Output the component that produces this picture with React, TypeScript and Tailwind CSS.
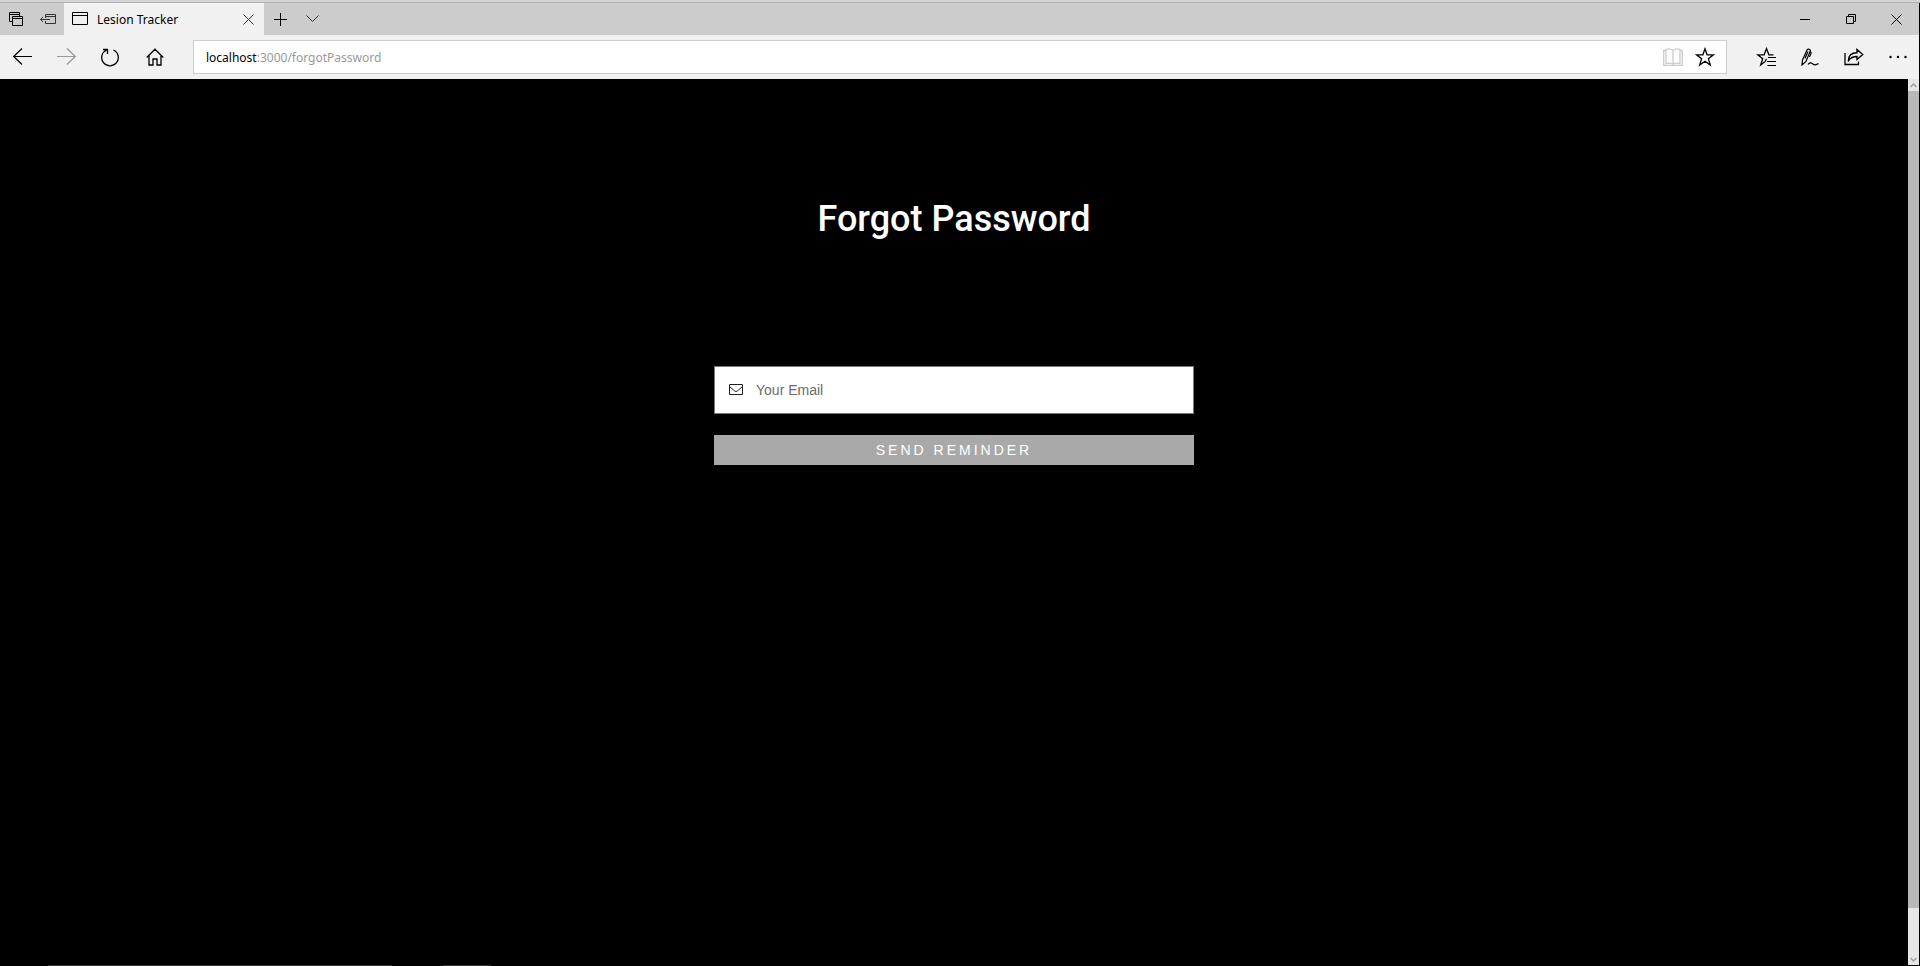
import type { ReactNode } from "react";

type IconProps = { w: number; h: number; children: ReactNode; className?: string };

function Icon({ w, h, children, className = "" }: IconProps) {
  return (
    <svg
      width={w}
      height={h}
      viewBox={`0 0 ${w} ${h}`}
      fill="none"
      stroke="currentColor"
      className={`shrink-0 ${className}`}
      aria-hidden="true"
    >
      {children}
    </svg>
  );
}

type BarButtonProps = { label: string; children: ReactNode; className: string; disabled?: boolean };

function BarButton({ label, children, className, disabled }: BarButtonProps) {
  return (
    <button
      type="button"
      aria-label={label}
      disabled={disabled}
      className={`flex h-full shrink-0 items-center justify-center ${className}`}
    >
      {children}
    </button>
  );
}

function TabStrip() {
  return (
    <div className="mr-px flex h-8 bg-[#cccccc] text-black">
      <BarButton label="Tabs you have set aside" className="w-8">
        <Icon w={14} h={14}>
          <path d="M3.500 9.500h-3v-9h10v4M0 2.500h11" />
          <path d="M3.500 4.500h10v9h-10zM3.500 6.500h10" />
        </Icon>
      </BarButton>
      <BarButton label="Set these tabs aside" className="w-8">
        <Icon w={16} h={10} className="text-[#333]">
          <path d="M5.500 4V0.500h10v9h-10V7M6 2.500h9M0.500 5.500H10M3 3L0.500 5.500l2.500 2.500" />
        </Icon>
      </BarButton>
      <div className="flex w-50 shrink-0 items-center bg-[#f1f1f1] pl-2">
        <Icon w={16} h={14}>
          <path d="M0.500 0.500h15v12h-15zM0 3.500h16" />
        </Icon>
        <span className="grow pt-px pl-[9px] text-[12px] leading-4">Lesion Tracker</span>
        <BarButton label="Close tab" className="w-8">
          <Icon w={11} h={11} className="text-[#333]">
            <path d="M0.500 0.500l10 10M10.500 0.500l-10 10" />
          </Icon>
        </BarButton>
      </div>
      <BarButton label="New tab" className="w-8 pl-px">
        <Icon w={13} h={13}>
          <path d="M6.500 0v13M0 6.500h13" />
        </Icon>
      </BarButton>
      <BarButton label="Show tab previews" className="w-8 pl-px">
        <Icon w={13} h={8} className="text-[#333]">
          <path d="M0.500 0.500l6 6l6-6" />
        </Icon>
      </BarButton>
      <div className="grow" />
      <BarButton label="Minimize" className="w-[46px]">
        <Icon w={10} h={10}>
          <path d="M0 5.500h10" />
        </Icon>
      </BarButton>
      <BarButton label="Restore" className="w-[46px]">
        <Icon w={10} h={10}>
          <path d="M0.500 2.500h7v7h-7zM2.500 2.500v-2h7v7h-2" />
        </Icon>
      </BarButton>
      <BarButton label="Close window" className="w-[45px]">
        <Icon w={11} h={11}>
          <path d="M0.500 0.500l10 10M10.500 0.500l-10 10" />
        </Icon>
      </BarButton>
    </div>
  );
}

function Toolbar() {
  return (
    <div className="mr-px flex h-11 bg-[#f1f1f1] text-black">
      <BarButton label="Back" className="w-[45px]">
        <Icon w={19} h={18}>
          <path d="M0.500 8.500H19" />
          <path d="M9 0.500L0.700 8.500L9 16.500" strokeWidth="1.200" />
        </Icon>
      </BarButton>
      <BarButton label="Forward" className="w-[43px] text-[#999]" disabled>
        <Icon w={19} h={18}>
          <path d="M0 8.500h18.500" />
          <path d="M10 0.500L18.300 8.500L10 16.500" strokeWidth="1.200" />
        </Icon>
      </BarButton>
      <BarButton label="Refresh" className="w-11">
        <Icon w={18} h={20}>
          <path d="M5.500 3A8.300 8.300 0 1 0 12.500 3M2 2.500h4.500V7" strokeWidth="1.300" />
        </Icon>
      </BarButton>
      <BarButton label="Home" className="w-11 pl-px">
        <Icon w={18} h={18}>
          <path d="M0.700 9.500L9 1.200l8.300 8.300M3 7.500v9.500h4v-6h4v6h4V7.500" strokeWidth="1.300" />
        </Icon>
      </BarButton>
      <div className="my-[5px] ml-[17px] flex min-w-0 grow items-center border border-[#cccccc] bg-white">
        <div className="relative ml-3 min-w-0 grow pt-px text-[12px] leading-4">
          <div aria-hidden="true" className="text-[#999]">
            <span className="text-black">localhost</span>:3000/forgotPassword
          </div>
          <input
            aria-label="Address"
            defaultValue="localhost:3000/forgotPassword"
            className="absolute inset-0 w-full bg-transparent text-transparent outline-none"
          />
        </div>
        <BarButton label="Reading view" className="w-8 text-[#ccc]" disabled>
          <Icon w={20} h={18}>
            <path
              d="M10 16V2.500Q7 0 3 1.500V15.500Q7 14.500 10 16Q13 14.500 17 15.500V1.500Q13 0 10 2.500M3 2.500H0.700v14.800h18.600V2.500H17"
              strokeWidth="1.300"
            />
          </Icon>
        </BarButton>
        <BarButton label="Add to favorites" className="mr-[5px] w-8">
          <Icon w={20} h={20}>
            <path
              d="M10 1.800l2.100 6h6.400l-5.100 3.900l1.900 6.300l-5.300-3.800l-5.300 3.800l1.900-6.300l-5.100-3.900h6.400z"
              strokeWidth="1.300"
            />
          </Icon>
        </BarButton>
      </div>
      <div className="ml-[17px] flex">
        <BarButton label="Favorites hub" className="w-11">
          <Icon w={20} h={20}>
            <path
              d="M17.500 7.800h-4.600l-2.400-6.200l-2.400 6.200h-6.400l5 3.900l-2 6.300l4.300-3.300l1.500-3"
              strokeWidth="1.300"
            />
            <path d="M12 10.500h8M11 14.500h9M11.500 18.500h8.500" strokeWidth="1.200" />
          </Icon>
        </BarButton>
        <BarButton label="Add notes" className="w-11">
          <Icon w={18} h={18}>
            <path
              d="M1 17L1.500 12L6 2Q6.800 0.700 8.200 1.200Q9.800 1.900 9.200 3.300L5 13.500zM7 3.500L4 10.500M9.500 3.500L10.200 5L8.500 9"
              strokeWidth="1.200"
            />
            <path d="M7 16.500C8.500 14.500 10 14.500 11.500 15.700S15 17.500 17.500 15.500" strokeWidth="1.200" />
          </Icon>
        </BarButton>
        <BarButton label="Share" className="w-11">
          <Icon w={20} h={18}>
            <path d="M1 5V16.500H14.500V13.500" strokeWidth="1.300" />
            <path
              d="M4.500 12.500Q4.500 4.700 13 4.700V1.500L18.700 6.500L13 11.500V8.500Q7.500 8.500 4.500 12.500z"
              strokeWidth="1.400"
            />
          </Icon>
        </BarButton>
        <BarButton label="Settings and more" className="w-[43px]">
          <Icon w={18} h={4}>
            <g fill="currentColor" stroke="none">
              <circle cx="1.500" cy="2" r="1.200" />
              <circle cx="9" cy="2" r="1.200" />
              <circle cx="16.500" cy="2" r="1.200" />
            </g>
          </Icon>
        </BarButton>
      </div>
    </div>
  );
}

function ScrollBar() {
  return (
    <div className="mr-px mb-px flex w-[11px] shrink-0 flex-col bg-[#e6e6e6] text-[#a0a0a0]" aria-hidden="true">
      <div className="flex h-3 items-center justify-center">
        <Icon w={7} h={5}>
          <path d="M0.500 4l3-3l3 3" strokeWidth="1.500" />
        </Icon>
      </div>
      <div className="grow-[18] bg-[#b8b8b8]" />
      <div className="grow" />
      <div className="flex h-3 items-center justify-center">
        <Icon w={7} h={5}>
          <path d="M0.500 1l3 3l3-3" strokeWidth="1.500" />
        </Icon>
      </div>
    </div>
  );
}

function ForgotPassword() {
  return (
    <main className="flex min-w-0 grow flex-col items-center pt-[120px] text-white">
      <h1 className="font-[Roboto,sans-serif] text-[36px] leading-10 font-medium">Forgot Password</h1>
      <form
        className="mt-[127px] flex w-120 max-w-full flex-col font-['Liberation_Sans',Arial,sans-serif] text-[14px]"
        onSubmit={(e) => e.preventDefault()}
      >
        <label className="flex h-12 items-center border border-[#767676] bg-white pl-[14px]">
          <Icon w={14} h={12} className="text-[#222]">
            <path d="M0.500 0.500h13v10h-13z" />
            <path d="M0.500 2.500l5.200 4.500q1.300 1 2.600 0l5.200-4.500" />
          </Icon>
          <input
            type="email"
            aria-label="Your Email"
            placeholder="Your Email"
            className="ml-[13px] h-full min-w-0 grow text-black outline-none placeholder:text-[#6b6b6b]"
          />
        </label>
        <button type="submit" className="mt-[21px] h-[30px] bg-[#a9a9a9] tracking-[3px] text-white">
          SEND REMINDER
        </button>
      </form>
    </main>
  );
}

export default function App() {
  return (
    <div className="flex min-h-screen flex-col bg-black font-['Noto_Sans','Open_Sans',sans-serif]">
      <header>
        <div className="h-[3px] border-b border-[#b0b0b0] bg-[#d4d4d4]" />
        <TabStrip />
        <Toolbar />
      </header>
      <div className="flex grow">
        <ForgotPassword />
        <ScrollBar />
      </div>
      <div className="-mt-px flex h-px pl-12" aria-hidden="true">
        <div className="w-[344px] bg-[#333]" />
        <div className="ml-[51px] w-12 bg-[#333]" />
      </div>
    </div>
  );
}
